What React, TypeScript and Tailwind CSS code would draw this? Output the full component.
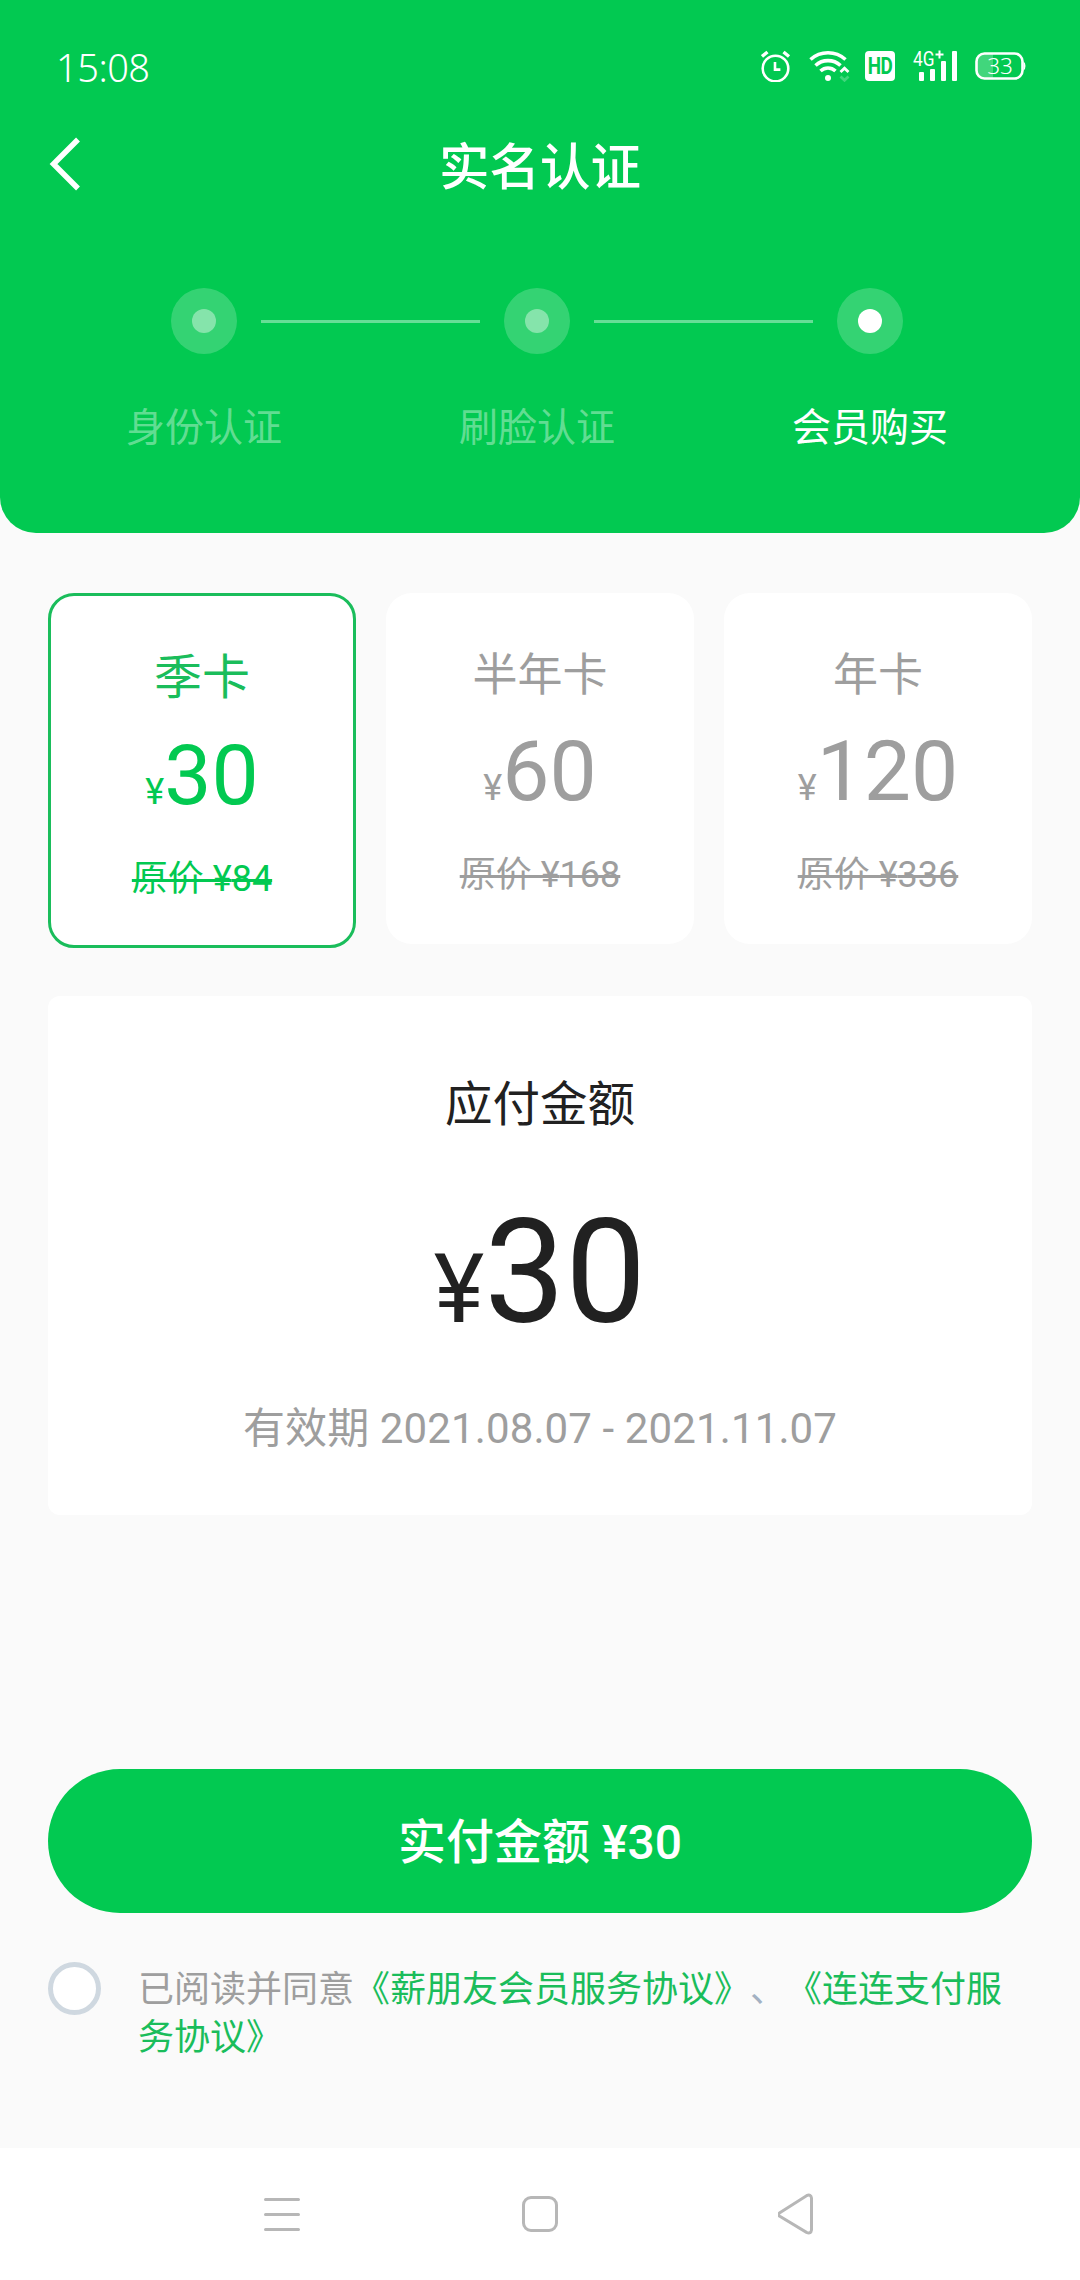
import clsx from 'clsx'

const steps = [
  { label: '身份认证', active: false },
  { label: '刷脸认证', active: false },
  { label: '会员购买', active: true },
]

const plans = [
  { name: '季卡', price: '30', original: '84', selected: true },
  { name: '半年卡', price: '60', original: '168', selected: false },
  { name: '年卡', price: '120', original: '336', selected: false },
]

function StatusBar() {
  return (
    <div className="flex h-[132px] items-center pl-[56px] pr-[54px] text-white">
      <span className="pt-[2px] font-['Noto_Sans'] text-[38px] font-[350] leading-[48px] tracking-[-0.5px]">15:08</span>
      <div className="ml-auto flex items-center">
        <svg className="h-8 w-[30px]" viewBox="0 0 30 32" fill="none" stroke="currentColor">
          <circle cx="14.500" cy="18.500" r="12.800" strokeWidth="2.600" />
          <path d="M14 12v7.600h5.400" strokeWidth="2.600" />
          <path d="M1 6.500 6.500 2M28 6.500 22.500 2" strokeWidth="3.400" />
        </svg>
        <svg className="ml-[18px] h-8 w-[42px]" viewBox="0 0 42 32" fill="none" stroke="currentColor">
          <path d="M1.500 9.500C11.500.500 26.500.500 36.500 9.500" strokeWidth="3.600" />
          <path d="M6.500 15.500c7-6.500 18-6.500 25 0" strokeWidth="3.600" />
          <path d="M11.500 21c4.500-4 10.500-4 15 0" strokeWidth="3.600" />
          <circle cx="19" cy="28" r="3" fill="currentColor" stroke="none" />
          <path d="m31.500 22 4-3.800 4 3.800" strokeWidth="2.800" />
          <path d="m31.500 26.500 4 3.800 4-3.800" strokeWidth="2.800" opacity=".25" />
        </svg>
        <div className="ml-[14px] flex h-[30px] w-[30px] items-center justify-center rounded-[4px] bg-white font-['Roboto'] text-[23px] font-bold leading-[30px] tracking-[-0.5px] text-[#02c951]">
          <span className="inline-block scale-x-[0.82] pt-px">HD</span>
        </div>
        <svg className="ml-[17px] h-8 w-[46px] overflow-visible" viewBox="0 0 46 32" fill="currentColor">
          <text x="1" y="16" fontFamily="Roboto" fontSize="20" textLength="21.500" lengthAdjust="spacingAndGlyphs">4G</text>
          <path d="M23.500 4.500h8M27.500.500v8" stroke="currentColor" strokeWidth="2" />
          <rect x="7" y="22" width="5" height="9" rx="1" />
          <rect x="18" y="19" width="5" height="12" rx="1" />
          <rect x="29" y="11" width="5" height="20" rx="1" />
          <rect x="40" y="1" width="5" height="30" rx="1" />
        </svg>
        <svg className="ml-[17px] h-8 w-[51px]" viewBox="0 0 51 32">
          <path d="M9 3.500h9v25H9a7 7 0 0 1-7-7v-11a7 7 0 0 1 7-7Z" fill="currentColor" opacity=".25" />
          <rect x="1.500" y="3.500" width="46" height="25" rx="8" fill="none" stroke="currentColor" strokeWidth="2.600" />
          <path d="M48.500 11.500q2 1 2 4.500t-2 4.500Z" fill="currentColor" />
          <text x="25" y="23.500" textAnchor="middle" fontFamily="Noto Sans" fontSize="22.500" fontWeight="350" fill="currentColor">33</text>
        </svg>
      </div>
    </div>
  )
}

function Header() {
  return (
    <header className="h-[533px] rounded-b-[36px] bg-[#02c951] text-white">
      <StatusBar />
      <div className="grid h-[60px] grid-cols-[200px_1fr_200px] items-center">
        <svg className="-mt-[3px] ml-[47px] h-[56px] w-9" viewBox="0 0 36 56" fill="none" stroke="currentColor" strokeWidth="5.500">
          <path d="M31 3.500 6.500 28 31 52.500" />
        </svg>
        <h1 className="pt-[6px] text-center text-[50.5px] font-medium leading-[60px]">实名认证</h1>
      </div>
      <div className="mt-24 flex items-center pl-[171px]">
        {steps.map((step, i) => (
          <div key={step.label} className="flex items-center">
            {i > 0 && <div className="mx-6 h-[3px] w-[219px] bg-white/40" />}
            <div className="flex h-[66px] w-[66px] items-center justify-center rounded-full bg-white/20">
              <div className={clsx('h-6 w-6 rounded-full', step.active ? 'bg-white' : 'bg-white/40')} />
            </div>
          </div>
        ))}
      </div>
      <div className="mt-[50px] grid w-[1074px] grid-cols-3 pl-[37.5px] pr-[37.5px]">
        {steps.map((step) => (
          <span
            key={step.label}
            className={clsx('text-center text-[39px] leading-[48px]', !step.active && 'text-white/40')}
          >
            {step.label}
          </span>
        ))}
      </div>
    </header>
  )
}

function PlanCard({ name, price, original, selected }: (typeof plans)[number]) {
  return (
    <div
      className={clsx(
        'flex w-[308px] flex-col items-center rounded-[26px] bg-white',
        selected
          ? 'h-[355px] border-[3px] border-[#1abd5b] pt-[52px] text-[#02c951]'
          : 'h-[351px] pt-[55px] text-[#9e9e9e]',
      )}
    >
      <span className={selected ? 'text-[48px] leading-[60px] text-[#1abd5b]' : 'text-[45px] leading-[56px]'}>
        {name}
      </span>
      <div className="mt-[23px] text-[84px] leading-[90px]">
        <span className="text-[36px] leading-none">¥</span>
        {price}
      </div>
      <span className="mt-[34px] text-[36px] leading-[48px] line-through decoration-[2.5px]">原价 ¥{original}</span>
    </div>
  )
}

function NavBar() {
  return (
    <nav className="mt-auto flex h-[132px] items-center justify-center gap-[218px] bg-white text-[#b7b7b7]">
      <svg className="h-11 w-10" viewBox="0 0 40 44" fill="none" stroke="currentColor" strokeWidth="3" strokeLinecap="round">
        <path d="M3.500 7.500h33M3.500 22.500h33M3.500 37.500h33" />
      </svg>
      <svg className="h-11 w-10" viewBox="0 0 40 44" fill="none" stroke="currentColor" strokeWidth="3">
        <rect x="3.500" y="5.500" width="33" height="33" rx="7.500" />
      </svg>
      <svg className="h-11 w-10" viewBox="0 0 40 44" fill="none" stroke="currentColor" strokeWidth="3">
        <path d="M1.800 20.800 28.500 3.700q4.500-2 5 2.500v31.600q-.500 4.500-5 2.500L1.800 24.200q-2.500-1.700 0-3.400Z" />
      </svg>
    </nav>
  )
}

export default function App() {
  return (
    <div
      lang="zh-CN"
      className="flex h-[2280px] w-[1080px] flex-col bg-[#fafafa] font-['Roboto','Noto_Sans_CJK_SC',sans-serif]"
    >
      <Header />
      <main className="px-12">
        <div className="mt-[60px] flex h-[355px] items-start gap-[30px]">
          {plans.map((plan) => (
            <PlanCard key={plan.name} {...plan} />
          ))}
        </div>

        <section className="mt-12 flex h-[519px] flex-col items-center rounded-[12px] bg-white pt-[79px] text-[#212121]">
          <h2 className="text-[47.5px] leading-[60px]">应付金额</h2>
          <div className="mt-[63px] text-[144px] leading-[150px]">
            <span className="text-[96px] leading-none">¥</span>30
          </div>
          <p className="mt-[53px] text-[42px] leading-[56px] tracking-[0.12px] text-[#9e9e9e]">有效期 2021.08.07 - 2021.11.07</p>
        </section>

        <button className="mt-[254px] block h-36 w-full rounded-full bg-[#02c951] pt-[4px] text-[48px] font-medium leading-[60px] text-white">
          实付金额 ¥30
        </button>

        <div className="mt-[49px] flex items-start">
          <div className="h-[53px] w-[53px] shrink-0 rounded-full border-[5px] border-[#cfd8e0] bg-white" />
          <p className="ml-[37px] mt-[4px] text-[36px] leading-[48px] text-[#1abd5b] [text-spacing-trim:space-all]">
            <span className="text-[#9e9e9e]">已阅读并同意</span>《薪朋友会员服务协议》<span className="text-[#a3b1c2]">、</span>《连连支付服务协议》
          </p>
        </div>
      </main>
      <NavBar />
    </div>
  )
}
